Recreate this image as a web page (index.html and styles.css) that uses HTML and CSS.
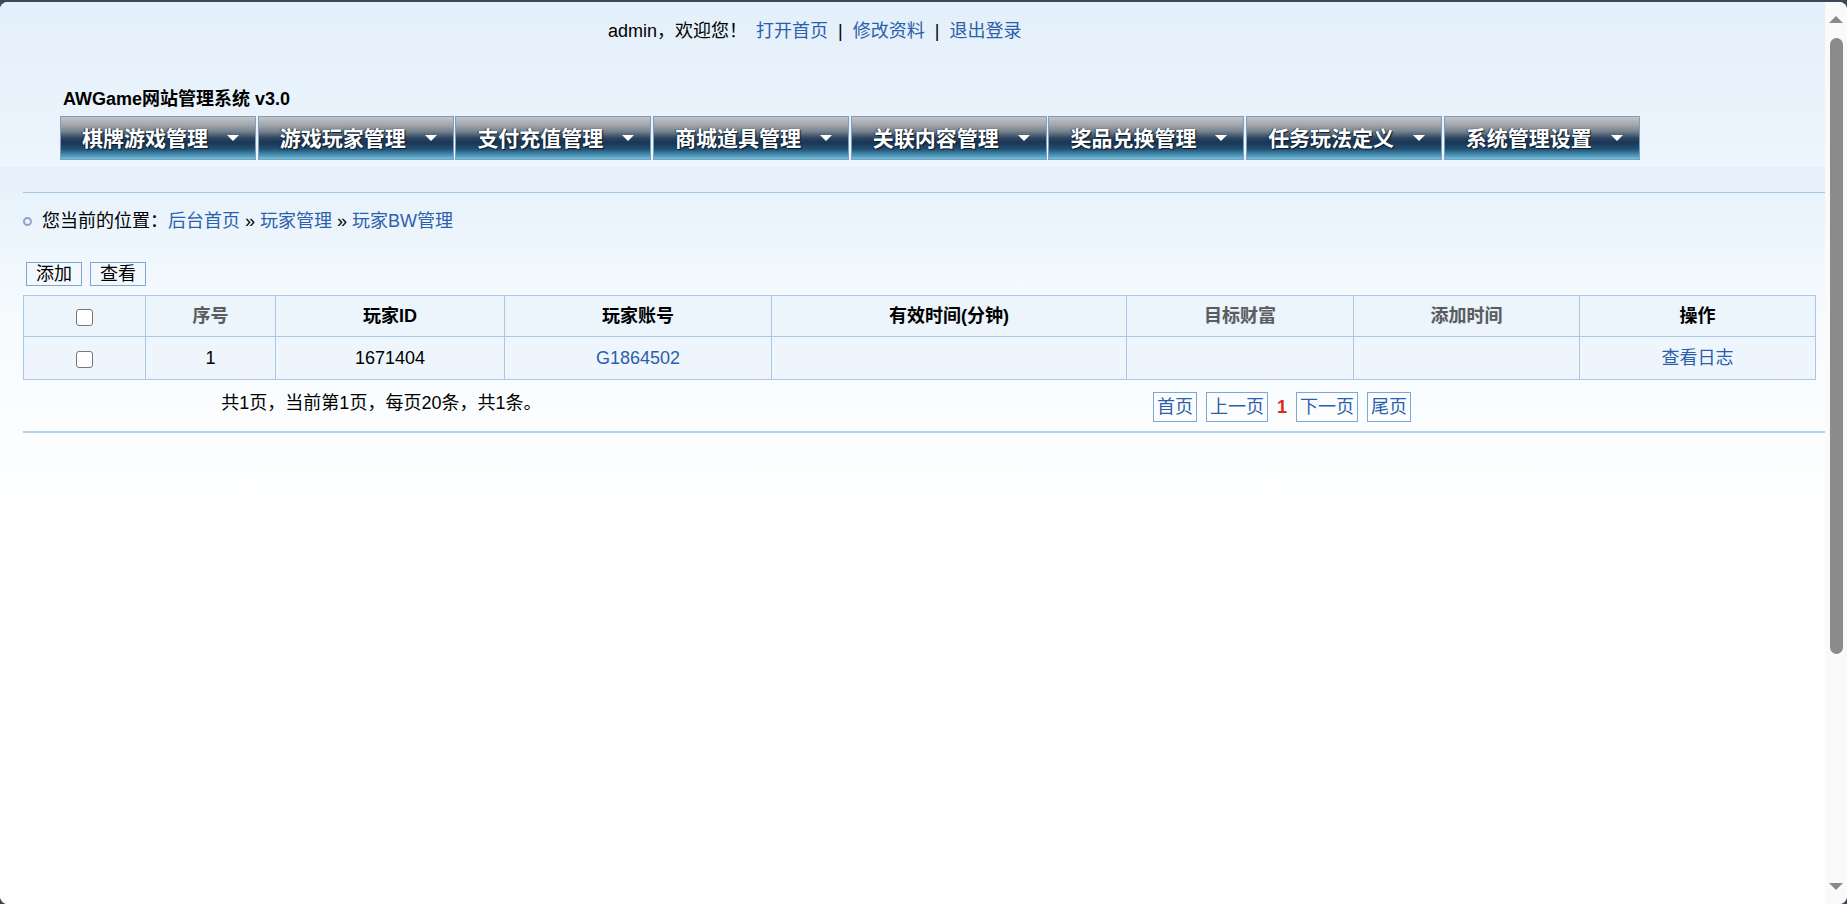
FILE: index.html
```html
<!DOCTYPE html>
<html lang="zh-CN">
<head>
<meta charset="utf-8">
<title>AWGame网站管理系统 v3.0</title>
<link rel="stylesheet" href="styles.css">
</head>
<body>
<div class="window">
  <div class="page">
    <header class="top">
      <div class="userbar">
        <span class="welcome">admin，欢迎您！</span><a class="ulink" href="#">打开首页</a><span class="sep">|</span><a class="ulink" href="#">修改资料</a><span class="sep">|</span><a class="ulink" href="#">退出登录</a>
      </div>
      <div class="title">AWGame网站管理系统 v3.0</div>
      <nav class="nav">
        <div class="navbtn"><span class="navtext">棋牌游戏管理</span><i class="caret"></i></div>
        <div class="navbtn"><span class="navtext">游戏玩家管理</span><i class="caret"></i></div>
        <div class="navbtn"><span class="navtext">支付充值管理</span><i class="caret"></i></div>
        <div class="navbtn"><span class="navtext">商城道具管理</span><i class="caret"></i></div>
        <div class="navbtn"><span class="navtext">关联内容管理</span><i class="caret"></i></div>
        <div class="navbtn"><span class="navtext">奖品兑换管理</span><i class="caret"></i></div>
        <div class="navbtn"><span class="navtext">任务玩法定义</span><i class="caret"></i></div>
        <div class="navbtn"><span class="navtext">系统管理设置</span><i class="caret"></i></div>
      </nav>
    </header>
    <div class="band"></div>
    <main class="content">
      <div class="rule"></div>
      <div class="crumb">
        <i class="dot"></i><span>您当前的位置：</span><a href="#">后台首页</a><span class="raquo">»</span><a href="#">玩家管理</a><span class="raquo">»</span><a href="#">玩家BW管理</a>
      </div>
      <div class="tools">
        <span class="tbtn">添加</span><span class="tbtn">查看</span>
      </div>
      <table class="grid">
        <colgroup>
          <col class="c1"><col class="c2"><col class="c3"><col class="c4"><col class="c5"><col class="c6"><col class="c7"><col class="c8">
        </colgroup>
        <thead>
          <tr>
            <th><span class="cb"></span></th>
            <th class="sort">序号</th>
            <th>玩家ID</th>
            <th>玩家账号</th>
            <th>有效时间(分钟)</th>
            <th class="sort">目标财富</th>
            <th class="sort">添加时间</th>
            <th>操作</th>
          </tr>
        </thead>
        <tbody>
          <tr>
            <td><span class="cb"></span></td>
            <td>1</td>
            <td>1671404</td>
            <td><a href="#">G1864502</a></td>
            <td></td>
            <td></td>
            <td></td>
            <td><a href="#">查看日志</a></td>
          </tr>
        </tbody>
      </table>
      <div class="pagerrow">
        <div class="pinfo">共1页，当前第1页，每页20条，共1条。</div>
        <div class="pager">
          <a class="pbox" href="#">首页</a>
          <a class="pbox" href="#">上一页</a>
          <span class="pcur">1</span>
          <a class="pbox" href="#">下一页</a>
          <a class="pbox" href="#">尾页</a>
        </div>
      </div>
      <div class="rule2"></div>
    </main>
  </div>
  <div class="scrollbar">
    <i class="arrow-up"></i>
    <div class="thumb"></div>
    <i class="arrow-down"></i>
  </div>
</div>
</body>
</html>
```

FILE: styles.css
```css
html, body {
  margin: 0;
  padding: 0;
  height: 100%;
}
body {
  background: #3f4858;
  font-family: "Liberation Sans", Arial, "Noto Sans CJK SC", sans-serif;
  font-size: 18px;
  color: #000;
  overflow: hidden;
}
a {
  color: #2b5fab;
  text-decoration: none;
}
.window {
  margin-top: 2px;
  height: 902px;
  display: flex;
  border-radius: 8px;
  overflow: hidden;
  background: #fff;
}
.page {
  flex: 1;
  display: flex;
  flex-direction: column;
  background: linear-gradient(to bottom, #e6f1fb 0px, #e9f3fc 200px, #f7fbfe 320px, #ffffff 520px);
}

/* header */
.top {
  height: 165px;
  background: linear-gradient(to bottom, #e3effa, #edf5fd);
  display: flex;
  flex-direction: column;
}
.userbar {
  padding: 17px 0 0 608px;
  height: 24px;
  line-height: 24px;
  font-size: 18px;
  white-space: nowrap;
}
.welcome {
  margin-right: 9px;
}
.sep {
  margin: 0 10px;
  color: #000;
}
.title {
  margin: 45px 0 0 63px;
  height: 22px;
  line-height: 22px;
  font-size: 18px;
  font-weight: bold;
}
.nav {
  margin: 6px 0 0 60px;
  display: grid;
  grid-template-columns: repeat(8, 196px);
  column-gap: 1.7px;
}
.navbtn {
  box-sizing: border-box;
  height: 44px;
  border: 1px solid #7f9ebb;
  background: linear-gradient(to bottom, #c4c4c4 0%, #a3a8ad 18%, #78848f 34%, #2d4660 50%, #1b3555 60%, #214e70 76%, #4d98bb 92%, #72c3de 100%);
  display: flex;
  align-items: center;
  padding: 2px 15px 0 21px;
}
.navtext {
  color: #fff;
  font-size: 21px;
  font-weight: bold;
  line-height: 24px;
  text-shadow: 1px 1px 1px #0b1a2a, -1px 0 1px rgba(10, 25, 40, 0.6);
  white-space: nowrap;
}
.caret {
  margin-left: auto;
  width: 0;
  height: 0;
  border-left: 6px solid transparent;
  border-right: 6px solid transparent;
  border-top: 6px solid #fff;
  margin-right: 1px;
  margin-bottom: 2px;
}

.band {
  height: 25px;
  background: #e5f0fb;
}

/* content */
.content {
  flex: 1;
  padding-left: 23px;
}
.rule {
  height: 1px;
  background: #a9c8e6;
}
.crumb {
  padding-top: 16px;
  height: 24px;
  line-height: 24px;
  display: flex;
  align-items: center;
  white-space: nowrap;
}
.dot {
  box-sizing: border-box;
  width: 9px;
  height: 9px;
  border: 2px solid #8fa5c8;
  border-radius: 50%;
  margin: 0 10px 0 0;
}
.raquo {
  margin: 0 5px;
}
.tools {
  margin-top: 29px;
  display: flex;
  gap: 8px;
  padding-left: 3px;
}
.tbtn {
  box-sizing: border-box;
  height: 24px;
  line-height: 22px;
  padding: 0 9px;
  border: 1px solid #7ea7d1;
  background: #f3f8fd;
}

.grid {
  margin-top: 9px;
  width: 1792px;
  border-collapse: collapse;
  table-layout: fixed;
}
.c1 { width: 122px; }
.c2 { width: 130px; }
.c3 { width: 229px; }
.c4 { width: 267px; }
.c5 { width: 355px; }
.c6 { width: 227px; }
.c7 { width: 226px; }
.c8 { width: 236px; }
.grid th, .grid td {
  border: 1px solid #a9c8e6;
  text-align: center;
  padding: 0;
  line-height: 24px;
}
.grid th {
  height: 40px;
  font-weight: bold;
  background: #ecf4fc;
}
.grid th.sort {
  color: #5c5c5c;
  text-shadow: 0 0 1px #c9d9ea;
}
.grid td {
  height: 42px;
  background: #eef5fc;
}
.cb {
  display: inline-block;
  box-sizing: border-box;
  width: 17px;
  height: 17px;
  border: 1px solid #767676;
  border-radius: 3px;
  background: #fff;
  vertical-align: middle;
}

.pagerrow {
  width: 1792px;
  height: 51px;
  display: flex;
}
.pinfo {
  width: 40%;
  text-align: center;
  padding-top: 11px;
  line-height: 24px;
}
.pager {
  flex: 1;
  display: flex;
  justify-content: center;
  align-items: flex-start;
  gap: 9px;
  padding-top: 12px;
  padding-left: 9px;
}
.pbox {
  box-sizing: border-box;
  height: 30px;
  line-height: 28px;
  padding: 0 3px;
  border: 1px solid #7ea7d1;
}
.pcur {
  color: #e0281e;
  font-weight: bold;
  line-height: 30px;
}
.rule2 {
  height: 2px;
  background: #b4d1ec;
}

/* scrollbar */
.scrollbar {
  width: 22px;
  background: #fafafa;
  position: relative;
}
.arrow-up, .arrow-down {
  position: absolute;
  left: 4px;
  width: 0;
  height: 0;
  border-left: 7px solid transparent;
  border-right: 7px solid transparent;
}
.arrow-up {
  top: 14px;
  border-bottom: 7px solid #8a8a8a;
}
.arrow-down {
  top: 881px;
  border-top: 7px solid #8a8a8a;
}
.thumb {
  position: absolute;
  left: 5px;
  top: 36px;
  width: 13px;
  height: 616px;
  border-radius: 7px;
  background: #8b8b8b;
}
```
